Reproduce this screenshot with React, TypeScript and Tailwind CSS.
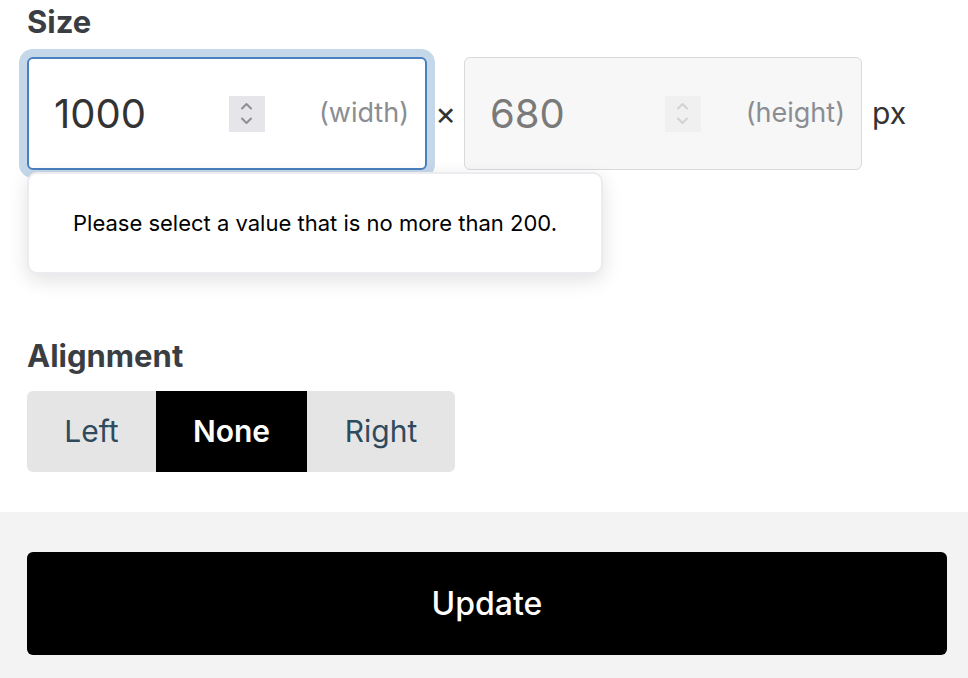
import { useState } from "react";

type Align = "Left" | "None" | "Right";

function Spinner({ faded = false }: { faded?: boolean }) {
  return (
    <div
      className={`w-[36px] h-[36px] flex items-center justify-center ${
        faded ? "bg-[#f0f0f0]" : "bg-[#e6e6ea]"
      }`}
    >
      <svg width="36" height="36" viewBox="0 0 36 36" fill="none">
        <path
          d="M13 12.5L17.5 8L22 12.5M13 22.5L17.5 27L22 22.5"
          stroke={faded ? "#d2d2d6" : "#8e8e93"}
          strokeWidth="2"
          strokeLinecap="round"
          strokeLinejoin="round"
        />
      </svg>
    </div>
  );
}

export default function App() {
  const [align, setAlign] = useState<Align>("None");

  // ancho fijo de cada segmento, medido en la captura
  const segments: { label: Align; w: string }[] = [
    { label: "Left", w: "w-[129px]" },
    { label: "None", w: "w-[151px]" },
    { label: "Right", w: "w-[148px]" },
  ];

  return (
    <div className="min-h-screen bg-white font-['Inter','Liberation_Sans',sans-serif] flex flex-col">
      <div className="pl-[27px] pt-[4px]">
        {/* Size */}
        <div className="text-[31px] leading-[36px] font-bold text-[#3a3e43]">Size</div>

        <div className="relative mt-[17px] flex items-center">
          {/* width input (focused) */}
          <div className="w-[400px] h-[113px] rounded-[6px] border-2 border-[#4a80c0] shadow-[0_0_0_8px_#c5d8ea] bg-white flex items-center pl-[25px] pr-[16px]">
            <div className="w-[211px] flex items-center">
              <span className="flex-1 text-[40px] text-[#333333]">1000</span>
              <Spinner />
            </div>
            <span className="ml-auto text-[27px] text-[#8a8d92]">(width)</span>
          </div>

          <span className="w-[37px] text-center text-[32px] text-[#333333] leading-none">×</span>

          {/* height input (disabled) */}
          <div className="w-[398px] h-[113px] rounded-[6px] border border-[#dadada] bg-[#f7f7f7] flex items-center pl-[25px] pr-[16px]">
            <div className="w-[211px] flex items-center">
              <span className="flex-1 text-[40px] text-[#7a7a7a]">680</span>
              <Spinner faded />
            </div>
            <span className="ml-auto text-[27px] text-[#8a8d92]">(height)</span>
          </div>

          <span className="ml-[10px] text-[30px] text-[#333333]">px</span>

          {/* tooltip de validación */}
          <div className="absolute left-0 top-[115px] w-[576px] h-[102px] rounded-[10px] bg-white border-2 border-[#ececf0] shadow-[0_6px_20px_rgba(0,0,0,0.12)] flex items-center justify-center text-[22px] text-black">
            Please select a value that is no more than 200.
          </div>
        </div>

        {/* Alignment */}
        <div className="mt-[168px] text-[31px] leading-[36px] font-bold text-[#3a3e43]">Alignment</div>

        <div className="mt-[17px] inline-flex h-[81px] rounded-[6px] bg-[#e5e5e5] overflow-hidden">
          {segments.map((s) => (
            <button
              key={s.label}
              onClick={() => setAlign(s.label)}
              className={`${s.w} h-full flex items-center justify-center text-[30px] ${
                align === s.label
                  ? "bg-black text-white font-semibold"
                  : "text-[#2f4a5d]"
              }`}
            >
              {s.label}
            </button>
          ))}
        </div>
      </div>

      {/* Footer */}
      <div className="mt-[40px] flex-1 bg-[#f3f3f3] pt-[40px] pb-[23px] pl-[27px]">
        <button className="w-[920px] h-[103px] rounded-[6px] bg-black text-white text-[32px] font-medium flex items-center justify-center">
          Update
        </button>
      </div>
    </div>
  );
}
